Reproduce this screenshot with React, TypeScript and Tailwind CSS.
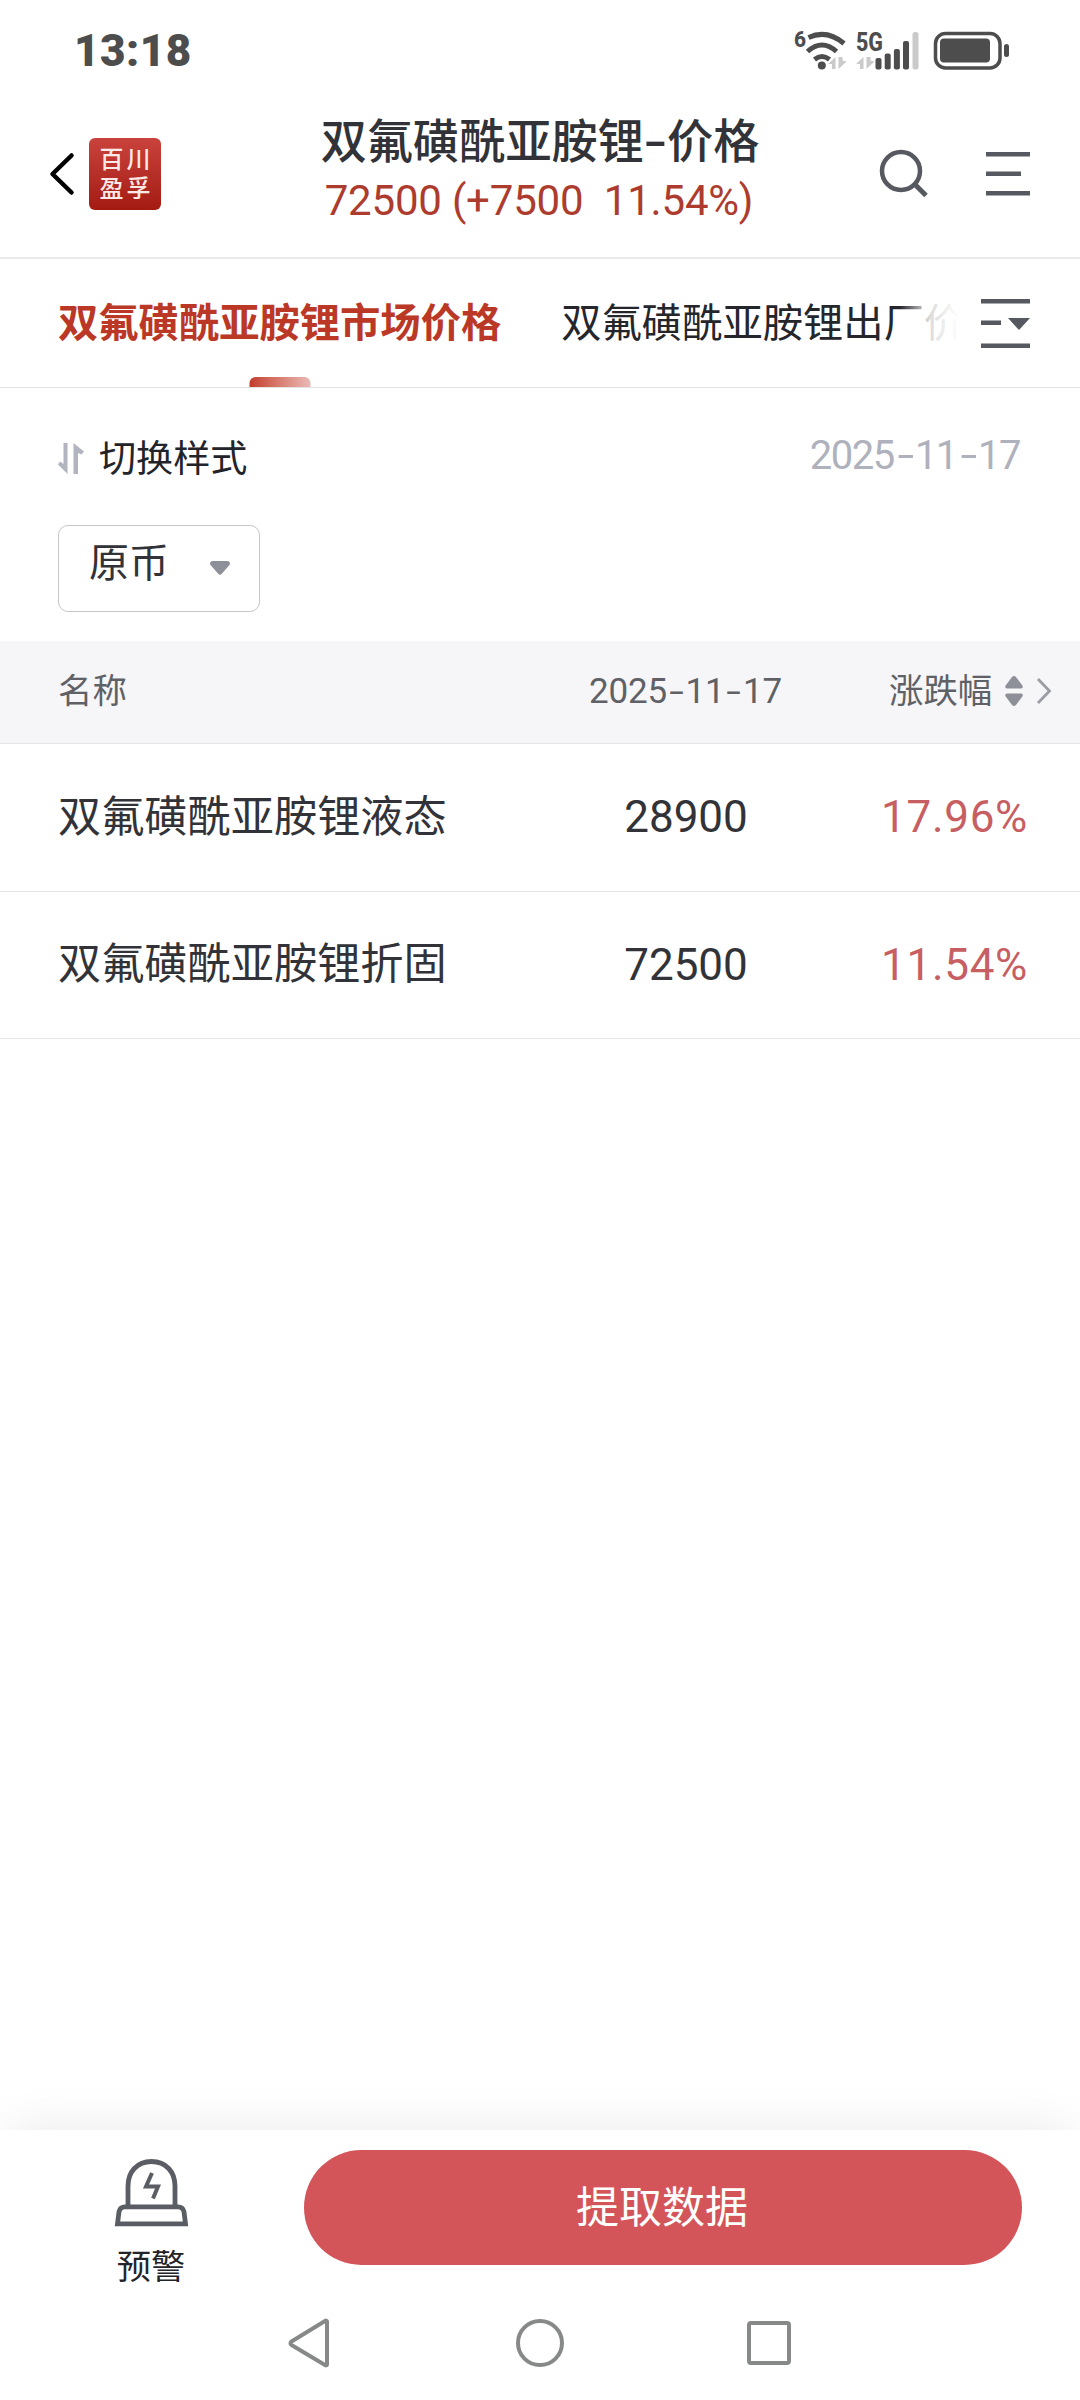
import { useState } from "react";
import { clsx } from "clsx";

const TABS = ["双氟磺酰亚胺锂市场价格", "双氟磺酰亚胺锂出厂价"];

const ROWS = [
  { id: "liquid", name: "双氟磺酰亚胺锂液态", price: "28900", change: "17.96%" },
  { id: "solid", name: "双氟磺酰亚胺锂折固", price: "72500", change: "11.54%" },
];

const LATEST_DATE = "2025-11-17";

function DateText({ value }: { value: string }) {
  const [year, month, day] = value.split("-");
  const dash = (
    <span className="inline-block w-[0.53em] scale-x-150 text-center">-</span>
  );

  return (
    <time dateTime={value}>
      {year}
      {dash}
      {month}
      {dash}
      {day}
    </time>
  );
}

function StatusIcons() {
  return (
    <svg width="220" height="50" viewBox="792 26 220 50" fill="none">
      <g fill="#4d4d4d" fontFamily="Roboto, sans-serif" fontWeight="800">
        <text x="794" y="47" fontSize="22" textLength="12" lengthAdjust="spacingAndGlyphs">
          6
        </text>
        <text x="856" y="51" fontSize="26" textLength="27" lengthAdjust="spacingAndGlyphs">
          5G
        </text>
      </g>
      <g stroke="#4d4d4d" strokeWidth="5">
        <path d="M808.5 37.5Q827 29 844 43.5" />
        <path d="M807.5 51.5Q822 38.5 836.5 51.5" />
        <path d="M814.5 59.5Q822 53.5 829.5 59.5" />
      </g>
      <circle cx="821.8" cy="65.5" r="4" fill="#4d4d4d" />
      <g fill="#cacaca">
        <path d="M835.5 57v12h-3.5v-5h-4zM838.5 57v12l8-7.5-4-1V57z" />
        <path d="M863.5 57v12h-3.5v-5h-4zM866.5 57v12l8-7.5-4-1V57z" />
        <rect x="912.5" y="32" width="6" height="37.5" rx="2.5" />
      </g>
      <g fill="#4d4d4d">
        <rect x="875.5" y="58" width="6" height="11.5" rx="2" />
        <rect x="884.7" y="53.5" width="6" height="16" rx="2" />
        <rect x="893.9" y="49" width="6" height="20.5" rx="2" />
        <rect x="903" y="41" width="6" height="28.5" rx="2" />
        <rect x="940" y="38.5" width="50" height="24" rx="4" />
        <rect x="1004" y="44" width="5" height="13" rx="2.5" />
      </g>
      <rect x="935.5" y="33.5" width="64.5" height="34.5" rx="10" stroke="#4d4d4d" strokeWidth="3.5" />
    </svg>
  );
}

function StatusBar() {
  return (
    <div className="flex h-[83px] shrink-0 items-center justify-between pt-[19px] pr-[68px] pl-[74px]">
      <span className="text-[44px] leading-none font-black tracking-[0.5px] text-[#4d4d4d]">
        13:18
      </span>
      <StatusIcons />
    </div>
  );
}

function Header() {
  return (
    <header className="grid h-44 shrink-0 grid-cols-[300px_1fr_300px] border-b-2 border-[#ebebeb]">
      <div className="flex items-center pt-2 pl-12">
        <button aria-label="返回">
          <svg width="28" height="46" viewBox="48 151 28 46" fill="none">
            <path d="M71.5 155.5L52.5 174L71.5 192.5" stroke="#000" strokeWidth="4.5" strokeLinecap="round" strokeLinejoin="round" />
          </svg>
        </button>
        <div className="ml-[13px] grid h-[72px] w-[72px] grid-cols-2 content-center justify-items-center gap-y-[5px] rounded-md bg-linear-to-b from-[#c9423c] to-[#a31a11] px-[9px] text-2xl leading-none font-medium text-[#fbe9e6]">
          <span>百</span>
          <span>川</span>
          <span>盈</span>
          <span>孚</span>
        </div>
      </div>
      <div className="flex flex-col items-center pt-[35px] whitespace-nowrap">
        <h1 className="text-[46.2px] leading-[48px] font-medium text-[#323338]">
          双氟磺酰亚胺锂
          <span className="inline-block w-[23px] scale-x-150 text-center">-</span>
          价格
        </h1>
        <p className="mt-[13px] mr-0.5 text-[42px] leading-[44px] tracking-[-0.2px] whitespace-pre text-[#ad3b2e]">
          72500 (+7500{"  "}11.54%)
        </p>
      </div>
      <div className="flex items-center justify-end gap-14 pt-2 pr-[50px]">
        <button aria-label="搜索">
          <svg width="52" height="52" viewBox="878 148 52 52" fill="none" stroke="#565960">
            <circle cx="901" cy="171" r="19" strokeWidth="4.5" />
            <path d="M915 184.5L926 195.5" strokeWidth="5" />
          </svg>
        </button>
        <button aria-label="菜单">
          <svg width="44" height="44" viewBox="0 0 44 44" fill="#565960">
            <path d="M0 0h44v4.5H0zM0 19.5h35V24H0zM0 39h44v4.5H0z" />
          </svg>
        </button>
      </div>
    </header>
  );
}

function Tabs() {
  const [active, setActive] = useState(0);

  return (
    <nav className="flex h-[129px] shrink-0 border-b border-[#e2e2e2] pl-[58px]">
      <div className="relative flex w-[908px] gap-[60px] overflow-hidden whitespace-nowrap">
        {TABS.map((tab, index) => (
          <button
            key={tab}
            onClick={() => setActive(index)}
            className={clsx(
              "relative shrink-0 pt-0.5 text-[40.3px] leading-none",
              index === active ? "font-bold text-[#bb3827]" : "text-[#25262b]"
            )}
          >
            {tab}
            {index === active && (
              <span className="absolute bottom-0 left-1/2 h-2.5 w-[61px] -translate-x-1/2 rounded-t-md bg-linear-to-r from-[#c23a2a] to-[#e9bab6]" />
            )}
          </button>
        ))}
        <span className="absolute inset-y-0 right-0 w-[66px] bg-[linear-gradient(to_right,transparent,rgba(255,255,255,0.6)_30%,rgba(255,255,255,0.84)_45%,#fff_90%)]" />
      </div>
      <button className="ml-[15px]" aria-label="筛选">
        <svg width="49" height="49" viewBox="0 0 49 49" fill="#565960">
          <path d="M0 0h49v4.5H0zM0 21.5h20V26H0zM0 44.5h49V49H0zM27 19h22L38 31z" />
        </svg>
      </button>
    </nav>
  );
}

function Toolbar() {
  return (
    <section className="h-[253px] shrink-0 px-[58px] pt-[46px]">
      <div className="flex h-12 items-center justify-between">
        <button className="flex items-center text-[37.1px] leading-none text-[#222429]">
          <svg width="26" height="31" viewBox="0 0 26 31" fill="#b2b4c0" className="mr-[15px]">
            <path d="M5.5 0h4v31L0 21.5l2-3 3.5 2.5zM15.5 31h4.5V10l3.5 1.5 2.5-3L15.5 0z" />
          </svg>
          <span className="pt-1">切换样式</span>
        </button>
        <span className="mr-0.5 pb-1 text-[40px] leading-none tracking-[-1.5px] text-[#afb1bc]">
          <DateText value={LATEST_DATE} />
        </span>
      </div>
      <button className="mt-[43px] flex h-[87px] w-[202px] items-start justify-between rounded-[10px] border border-[#c6c6c8] pt-[18px] pr-[29px] pl-[30px]">
        <span className="text-[40px] leading-10 text-[#323338]">原币</span>
        <svg width="20" height="14" viewBox="0 0 20 14" className="mt-[17px]">
          <path d="M2 0h16q3 1 1.5 4L12 12.5q-2 2.5-4 0L.5 4Q-1 1 2 0z" fill="#8e9099" />
        </svg>
      </button>
    </section>
  );
}

function PriceTable() {
  return (
    <section className="shrink-0">
      <div className="flex h-[103px] items-center border-b border-[#e5e5e5] bg-[#f6f6f9] pb-0.5 pl-[58px] text-[34.4px] leading-none text-[#606166]">
        <span className="w-[531px]">名称</span>
        <span className="w-[300px] text-[35px] tracking-[-0.2px]">
          <DateText value={LATEST_DATE} />
        </span>
        <button className="flex items-center">
          涨跌幅
          <svg width="18" height="30" viewBox="0 0 18 30" fill="#8e9099" className="ml-[13px]">
            <path d="M7 1q2-2 4 0l6 8q2 3-1 3.5H2Q-1 12 1 9zM7 29q2 2 4 0l6-8q2-3-1-3.5H2Q-1 18 1 21z" />
          </svg>
          <svg width="16" height="28" viewBox="0 0 16 28" fill="none" className="ml-[13px]">
            <path d="M2 2l11.5 12L2 26" stroke="#9b9da4" strokeWidth="2.8" />
          </svg>
        </button>
      </div>
      {ROWS.map((row) => (
        <div
          key={row.id}
          className="flex h-[147.5px] items-center border-b border-[#e5e5e5] pr-[52px] pl-[58px] text-[43.2px] leading-none text-[#323338]"
        >
          <span className="w-[500px]">{row.name}</span>
          <span className="w-64 text-center text-[44px]">{row.price}</span>
          <span className="flex-1 text-right text-[44px] tracking-[0.7px] text-[#c75e62]">
            {row.change}
          </span>
        </div>
      ))}
    </section>
  );
}

function ActionBar() {
  return (
    <footer className="flex h-[162px] shrink-0 items-start bg-white pr-[58px] shadow-[0_-8px_50px_-8px_rgba(0,0,0,0.09)]">
      <button className="flex w-[304px] flex-col items-center pt-[27px] pr-0.5 text-[34.2px] leading-none text-[#222429]">
        <svg width="74" height="70" viewBox="114 2157 74 70" fill="none" stroke="#5b5d64" strokeWidth="4.8">
          <path d="M128 2207v-21c0-14 9-24.5 23.5-24.5s23.5 10.5 23.5 24.5v21" />
          <path d="M125 2206.8h53q5 0 6 5l1.5 12h-68l1.5-12q1-5 6-5z" />
          <path d="M152 2173l-6 13.5h12l-5 12" strokeWidth="4" />
        </svg>
        <span className="mt-[23px]">预警</span>
      </button>
      <button className="mt-5 h-[115px] flex-1 rounded-full bg-[#d35459] pt-0.5 pr-0.5 text-[43px] leading-none text-white">
        提取数据
      </button>
    </footer>
  );
}

function SystemNav() {
  return (
    <div className="flex h-[108px] shrink-0 items-center justify-center gap-[181px] bg-white pb-1.5">
      <svg width="50" height="50" viewBox="0 0 50 50" fill="none" stroke="#878988" strokeWidth="4" strokeLinejoin="round">
        <path d="M43 3.500v43Q42.500 48 41 47L7.500 27q-2-1.500 0-3.500L41 3Q42.500 2 43 3.500z" />
      </svg>
      <svg width="50" height="50" viewBox="0 0 50 50" fill="none" stroke="#878988" strokeWidth="4">
        <circle cx="25" cy="25" r="22" />
      </svg>
      <svg width="50" height="50" viewBox="0 0 50 50" fill="none" stroke="#878988" strokeWidth="4">
        <rect x="3" y="5" width="40" height="40" rx="2" />
      </svg>
    </div>
  );
}

export default function App() {
  return (
    <div className="flex h-[2400px] w-[1080px] flex-col overflow-hidden bg-white font-[Roboto,'Noto_Sans_CJK_SC',sans-serif]">
      <StatusBar />
      <Header />
      <Tabs />
      <Toolbar />
      <PriceTable />
      <main className="flex-1" />
      <ActionBar />
      <SystemNav />
    </div>
  );
}
